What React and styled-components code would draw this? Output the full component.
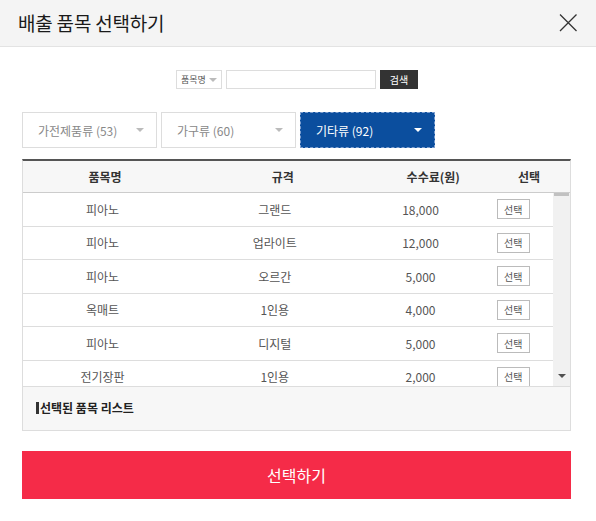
import React from "react";
import styled, { createGlobalStyle } from "styled-components";

const GlobalStyle = createGlobalStyle`
  * { box-sizing: border-box; }
  body {
    margin: 0;
    background: #ffffff;
    font-family: "Noto Sans CJK KR", "Noto Sans", sans-serif;
    color: #333;
  }
  button, input { font-family: inherit; }
`;

const Modal = styled.div`
  width: 596px;
  height: 521px;
  background: #fff;
`;

const Header = styled.header`
  display: flex;
  align-items: center;
  justify-content: space-between;
  height: 47px;
  padding: 0 18px 1px 18px;
  background: #f4f4f4;
  border-bottom: 1px solid #e3e3e3;
`;

const Title = styled.h1`
  margin: 0;
  font-size: 19px;
  font-weight: 400;
  color: #1a1a1a;
  letter-spacing: -0.2px;
`;

const CloseButton = styled.button`
  display: flex;
  width: 20px;
  height: 20px;
  padding: 0;
  border: 0;
  background: none;
  cursor: pointer;
`;

const Content = styled.div`
  padding: 23px 25px 0 22px;
`;

const SearchBar = styled.div`
  display: flex;
  justify-content: center;
  gap: 4px;
  height: 19px;
  padding-left: 1px;
`;

const SelectBox = styled.div`
  display: flex;
  flex-shrink: 0;
  align-items: center;
  gap: 3px;
  width: 46px;
  padding: 0 3px 0 4px;
  border: 1px solid #ddd;
  font-size: 9px;
  white-space: nowrap;
  color: #555;
  &::after {
    content: "";
    border-left: 4px solid transparent;
    border-right: 4px solid transparent;
    border-top: 4px solid #bbb;
  }
`;

const SearchInput = styled.input`
  width: 150px;
  height: 19px;
  border: 1px solid #ddd;
  padding: 0 4px;
  outline: none;
`;

const SearchButton = styled.button`
  width: 38px;
  height: 19px;
  padding: 0;
  border: 0;
  background: #333;
  color: #fff;
  font-size: 10px;
`;

const Tabs = styled.div`
  display: flex;
  gap: 4px;
  margin-top: 23px;
`;

const Tab = styled.button`
  display: flex;
  align-items: center;
  justify-content: space-between;
  width: 135px;
  height: 36px;
  padding: 0 12px 0 15px;
  border: 1px ${(p) => (p.$active ? "dashed #7d9fd0" : "solid #ddd")};
  background: ${(p) => (p.$active ? "#0b4e9e" : "#fff")};
  color: ${(p) => (p.$active ? "#fff" : "#888")};
  font-size: 12px;
  cursor: pointer;
  &::after {
    content: "";
    border-left: 4px solid transparent;
    border-right: 4px solid transparent;
    border-top: 4px solid ${(p) => (p.$active ? "#fff" : "#bbb")};
  }
`;

const Table = styled.div`
  margin-top: 11px;
  border-top: 2px solid #555;
  border-left: 1px solid #ddd;
  border-right: 1px solid #ddd;
`;

const Cols = styled.div`
  display: grid;
  grid-template-columns: 30% 35% 20% 15%;
  align-items: center;
  text-align: center;
  font-size: 12px;
`;

const HeadRow = styled(Cols)`
  height: 32px;
  background: #f7f7f7;
  border-bottom: 1px solid #ccc;
  color: #333;
  font-weight: 700;
`;

const BodyWrap = styled.div`
  display: flex;
  height: 193px;
`;

const Rows = styled.div`
  flex: 1;
  overflow: hidden;
`;

const Row = styled(Cols)`
  height: 33.5px;
  border-bottom: 1px solid #ddd;
  color: #555;
`;

const PickButton = styled.button`
  justify-self: center;
  width: 33px;
  height: 20px;
  padding: 0;
  border: 1px solid #bbb;
  background: #fff;
  color: #555;
  font-size: 10px;
  cursor: pointer;
`;

const ScrollTrack = styled.div`
  display: flex;
  flex-direction: column;
  justify-content: space-between;
  align-items: center;
  width: 17px;
  padding: 0 1px 8px;
  background: #f1f1f1;
`;

const Thumb = styled.div`
  width: 100%;
  height: 3px;
  background: #c1c1c1;
`;

const ArrowDown = styled.div`
  border-left: 4px solid transparent;
  border-right: 4px solid transparent;
  border-top: 4px solid #505050;
`;

const SelectedBox = styled.div`
  height: 45px;
  padding: 12px 13px 0;
  background: #f7f7f7;
  border: 1px solid #ddd;
`;

const SelectedTitle = styled.h2`
  display: flex;
  align-items: center;
  gap: 1px;
  margin: 0;
  font-size: 12px;
  font-weight: 700;
  color: #222;
  &::before {
    content: "";
    width: 3px;
    height: 12px;
    background: #333;
  }
`;

const SubmitButton = styled.button`
  display: block;
  width: 100%;
  height: 48px;
  margin-top: 20px;
  border: 0;
  background: #f52b48;
  color: #fff;
  font-size: 16px;
  cursor: pointer;
`;

const items = [
  ["피아노", "그랜드", "18,000"],
  ["피아노", "업라이트", "12,000"],
  ["피아노", "오르간", "5,000"],
  ["옥매트", "1인용", "4,000"],
  ["피아노", "디지털", "5,000"],
  ["전기장판", "1인용", "2,000"],
];

const tabs = [
  { label: "가전제품류 (53)" },
  { label: "가구류 (60)" },
  { label: "기타류 (92)", active: true },
];

export default function App() {
  return (
    <Modal>
      <GlobalStyle />
      <Header>
        <Title>배출 품목 선택하기</Title>
        <CloseButton aria-label="닫기">
          <svg width="20" height="20" viewBox="0 0 20 20">
            <path d="M2 1.5 L18.5 18 M18.5 1.5 L2 18" stroke="#333" strokeWidth="1.3" fill="none" />
          </svg>
        </CloseButton>
      </Header>
      <Content>
        <SearchBar>
          <SelectBox>품목명</SelectBox>
          <SearchInput />
          <SearchButton>검색</SearchButton>
        </SearchBar>
        <Tabs>
          {tabs.map((t) => (
            <Tab key={t.label} $active={t.active}>
              {t.label}
            </Tab>
          ))}
        </Tabs>
        <Table>
          <HeadRow>
            <span>품목명</span>
            <span>규격</span>
            <span>수수료(원)</span>
            <span>선택</span>
          </HeadRow>
          <BodyWrap>
            <Rows>
              {items.map(([name, spec, fee], i) => (
                <Row key={i}>
                  <span>{name}</span>
                  <span>{spec}</span>
                  <span>{fee}</span>
                  <PickButton>선택</PickButton>
                </Row>
              ))}
            </Rows>
            <ScrollTrack>
              <Thumb />
              <ArrowDown />
            </ScrollTrack>
          </BodyWrap>
        </Table>
        <SelectedBox>
          <SelectedTitle>선택된 품목 리스트</SelectedTitle>
        </SelectedBox>
        <SubmitButton>선택하기</SubmitButton>
      </Content>
    </Modal>
  );
}
